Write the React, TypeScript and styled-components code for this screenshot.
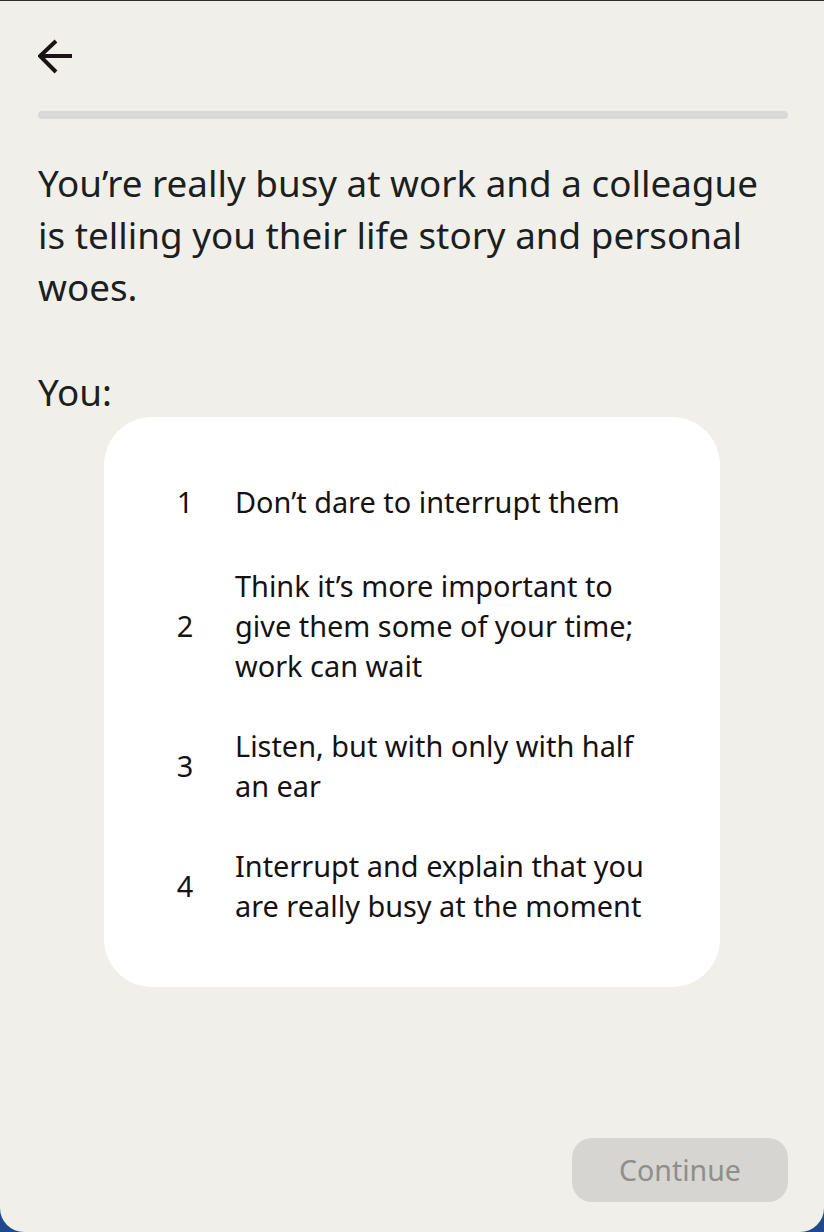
import React from "react";
import styled, { createGlobalStyle } from "styled-components";

const GlobalStyle = createGlobalStyle`
  html, body {
    margin: 0;
    padding: 0;
    background: #1d4a8e;
  }
  * { box-sizing: border-box; }
`;

const Screen = styled.div`
  height: 1232px;
  background: #f1efe9;
  border-top: 1px solid #2e2e2c;
  border-radius: 0 0 24px 24px;
  display: flex;
  flex-direction: column;
  padding: 0 36px 30px 38px;
  font-family: "Noto Sans", "Open Sans", sans-serif;
  color: #1b1f1f;
`;

const TopBar = styled.div`
  height: 110px;
  display: flex;
  align-items: flex-start;
  padding-top: 38px;
`;

const BackButton = styled.button`
  border: none;
  background: none;
  padding: 0;
  width: 36px;
  height: 36px;
  display: flex;
  align-items: center;
  justify-content: flex-start;
  cursor: pointer;
`;

const Progress = styled.div`
  height: 8px;
  border-radius: 4px;
  background: #d9d9d7;
`;

const Question = styled.p`
  margin: 38px 0 0;
  font-size: 36.8px;
  line-height: 52px;
  font-weight: 400;
  color: #1b1f1f;
  padding-right: 10px;
`;

const Prompt = styled.p`
  margin: 53px 0 0;
  font-size: 36.8px;
  line-height: 52px;
  color: #1b1f1f;
`;

const Card = styled.div`
  align-self: center;
  width: 616px;
  margin: -1px 0 0 -2px;
  background: #ffffff;
  border-radius: 48px;
  padding: 41px 62px 41px 70px;
  display: flex;
  flex-direction: column;
`;

const Option = styled.div`
  display: flex;
  align-items: center;
  min-height: 88px;
  padding: 20px 0;
  font-size: 28.9px;
  line-height: 40px;
  color: #161213;
`;

const OptionNumber = styled.span`
  width: 22px;
  flex: none;
  text-align: center;
  margin-right: 39px;
`;

const OptionText = styled.span`
  flex: 1;
`;

const Spacer = styled.div`
  flex: 1;
`;

const Footer = styled.div`
  display: flex;
  justify-content: flex-end;
`;

const ContinueButton = styled.button`
  width: 216px;
  height: 64px;
  border: none;
  border-radius: 20px;
  background: #d6d5d1;
  color: #8e8e8b;
  font-family: "Noto Sans", "Open Sans", sans-serif;
  font-size: 28.5px;
  padding: 0;
`;

const options = [
  "Don’t dare to interrupt them",
  "Think it’s more important to give them some of your time; work can wait",
  "Listen, but with only with half an ear",
  "Interrupt and explain that you are really busy at the moment",
];

export default function App() {
  return (
    <>
      <GlobalStyle />
      <Screen>
        <TopBar>
          <BackButton aria-label="Back">
            <svg width="36" height="36" viewBox="0 0 36 36" fill="none">
              <path
                d="M2 17H34M18 2L2 17L18 33"
                stroke="#1a1414"
                strokeWidth="4"
                strokeLinecap="butt"
                strokeLinejoin="miter"
              />
            </svg>
          </BackButton>
        </TopBar>
        <Progress />
        <Question>
          You’re really busy at work and a colleague is telling you their life
          story and personal woes.
        </Question>
        <Prompt>You:</Prompt>
        <Card>
          {options.map((o, i) => (
            <Option key={i}>
              <OptionNumber>{i + 1}</OptionNumber>
              <OptionText>{o}</OptionText>
            </Option>
          ))}
        </Card>
        <Spacer />
        <Footer>
          <ContinueButton disabled>Continue</ContinueButton>
        </Footer>
      </Screen>
    </>
  );
}
